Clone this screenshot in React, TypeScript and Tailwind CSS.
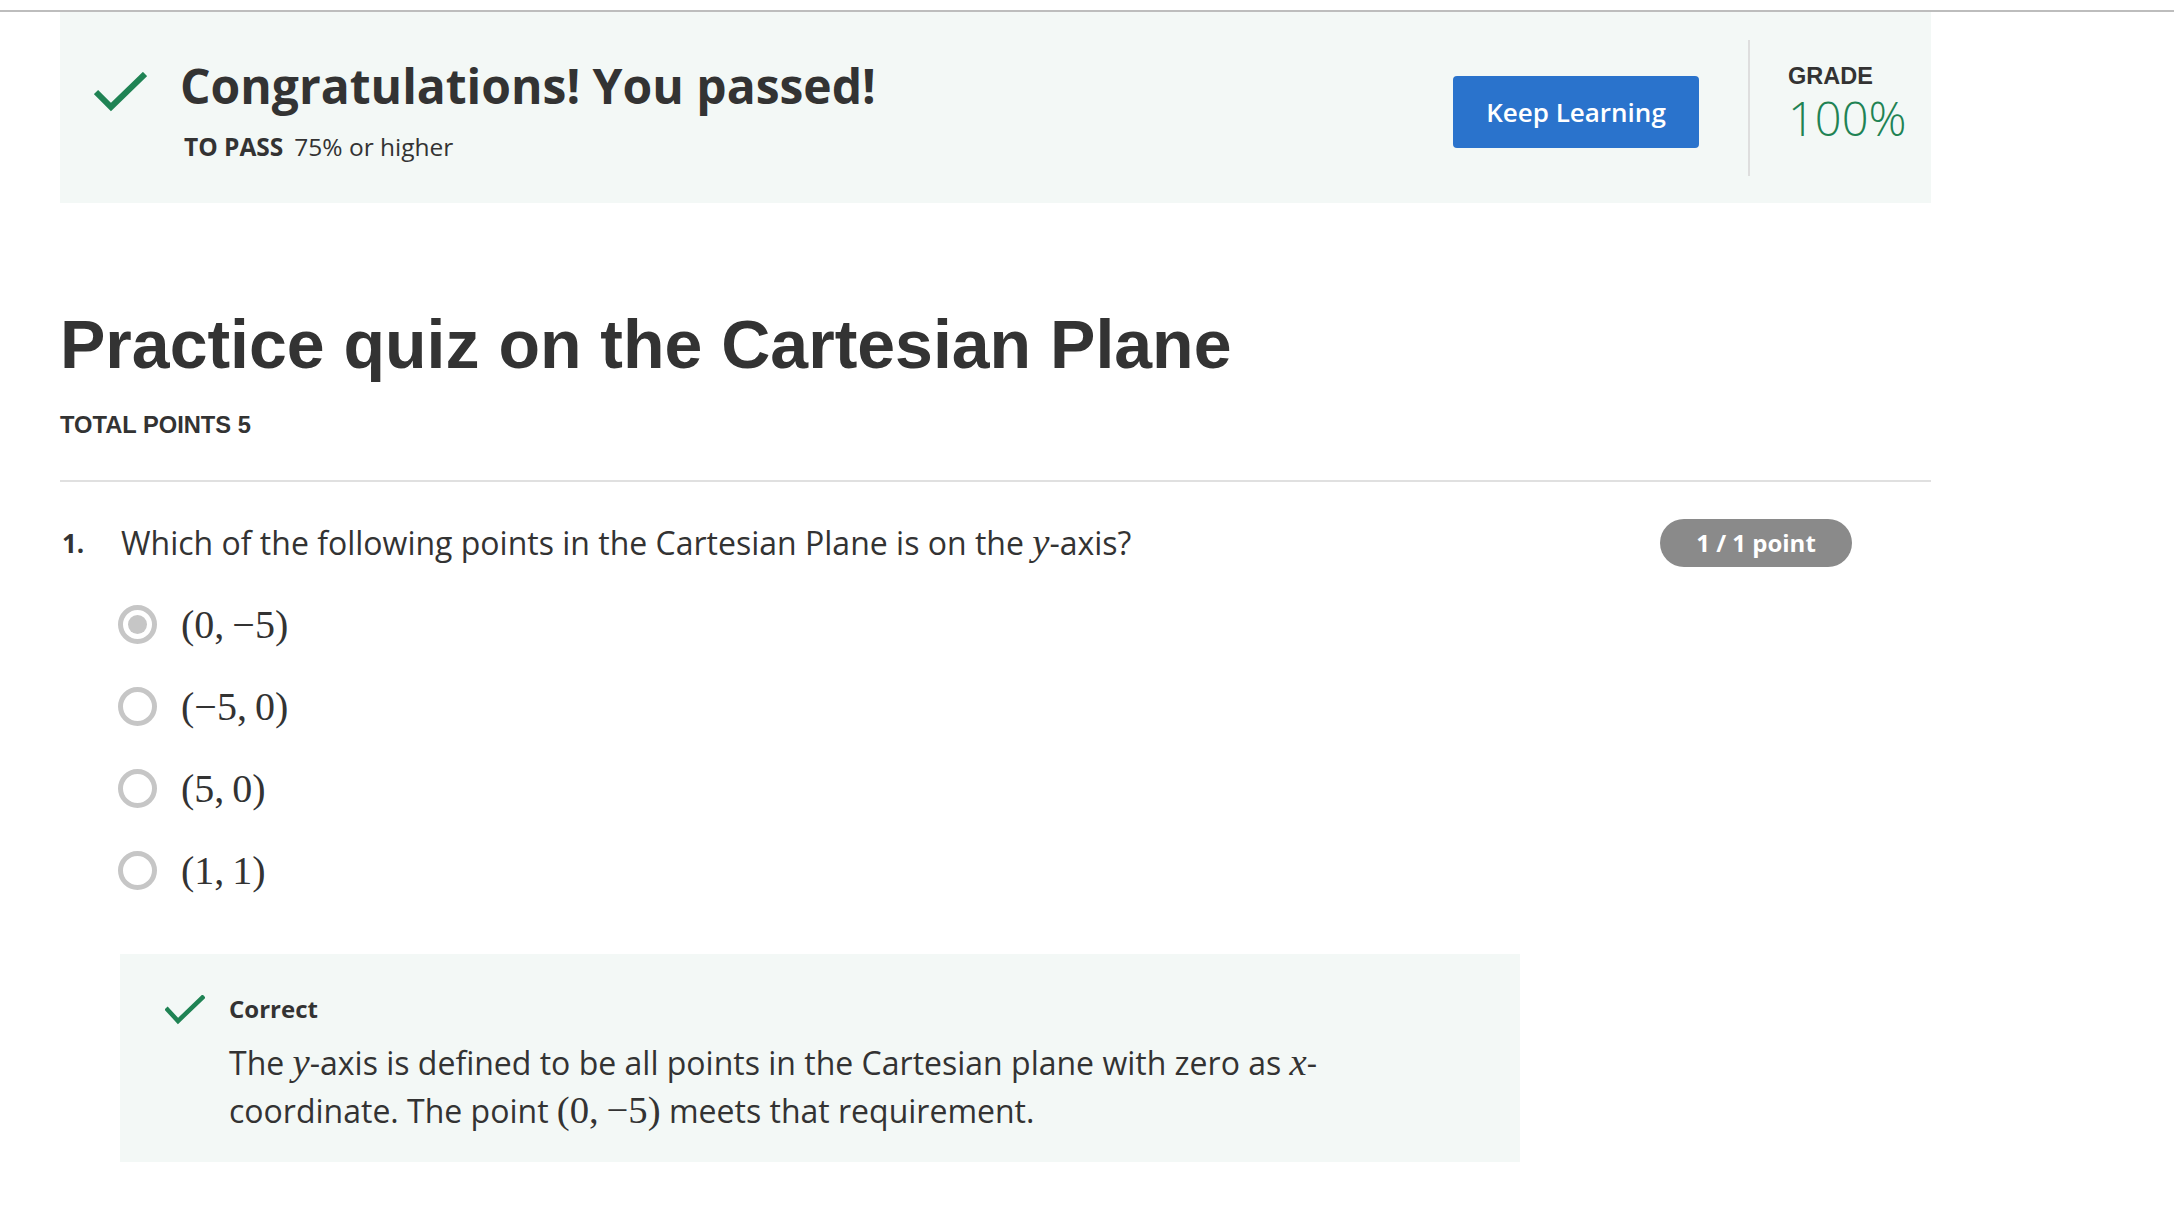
import React from 'react';

const sans = { fontFamily: '"Open Sans", "Liberation Sans", sans-serif' };

const CheckMark: React.FC<{ big?: boolean }> = ({ big }) =>
  big ? (
    <svg width="53" height="40" viewBox="0 0 53 40" className="shrink-0">
      <polyline points="2,20 17,35 51,2" fill="none" stroke="#1f8354" strokeWidth="6" />
    </svg>
  ) : (
    <svg width="40" height="30" viewBox="0 0 40 30" className="shrink-0">
      <polyline points="1,13 13,26 39,1" fill="none" stroke="#1f8354" strokeWidth="4.5" />
    </svg>
  );

const MathVar: React.FC<{ children: React.ReactNode }> = ({ children }) => (
  <span className="font-['Liberation_Serif',serif] italic text-[1.21em] leading-none">{children}</span>
);

const MathText: React.FC<{ children: React.ReactNode }> = ({ children }) => (
  <span className="font-['Liberation_Serif',serif] text-[1.21em] leading-none">{children}</span>
);

interface Option {
  label: string;
  selected: boolean;
}

const options: Option[] = [
  { label: '(0,\u2009\u22125)', selected: true },
  { label: '(\u22125,\u20090)', selected: false },
  { label: '(5,\u20090)', selected: false },
  { label: '(1,\u20091)', selected: false },
];

export default function App() {
  return (
    <div className="min-h-screen w-full bg-white text-[#333333]" style={sans}>
      <div className="pt-[10px]">
        <div className="h-[2px] w-full bg-[#bdbdbd]" />
      </div>

      <div className="ml-[60px] w-[1871px]">
        {/* Result banner */}
        <div className="flex h-[191px] items-start bg-[#f3f8f6]">
          <div className="mt-[44px] flex flex-1 items-start pl-[34px]">
            <div className="mt-[16px]">
              <CheckMark big />
            </div>
            <div className="ml-[33px]">
              <h1 className="text-[48px] font-bold leading-[60px] text-[#333333]">
                Congratulations! You passed!
              </h1>
              <div className="mt-[15px] flex pl-[4px] text-[24.5px] leading-[32px] text-[#333333]">
                <span className="font-bold">TO PASS</span>
                <span className="ml-[11px]">75% or higher</span>
              </div>
            </div>
          </div>

          <button className="mt-[64px] flex h-[72px] w-[246px] items-center justify-center rounded-[4px] bg-[#2a73cc] text-[26px] font-semibold text-white">
            Keep Learning
          </button>

          <div className="ml-[49px] mt-[28px] h-[136px] w-[2px] bg-[#dedede]" />

          <div className="ml-[38px] mt-[50px] w-[143px]">
            <div className="font-['Liberation_Sans',sans-serif] text-[23.5px] font-bold leading-[28px] text-[#333333]">
              GRADE
            </div>
            <div className="text-[47px] font-light leading-[56px] text-[#1f8354]">100%</div>
          </div>
        </div>

        {/* Title */}
        <h2 className="mt-[101px] font-['Liberation_Sans',sans-serif] text-[68px] font-bold leading-[80px] text-[#333333]">
          Practice quiz on the Cartesian Plane
        </h2>
        <div className="mt-[27px] font-['Liberation_Sans',sans-serif] text-[23.7px] font-bold leading-[28px] text-[#333333]">
          TOTAL POINTS 5
        </div>

        <div className="mt-[41px] h-[2px] w-full bg-[#e0e0e0]" />

        {/* Question */}
        <div className="mt-[37px] flex items-start">
          <div className="w-[61px] pl-[2px] text-[26px] font-bold leading-[48px]">1.</div>
          <div className="flex-1 text-[32px] leading-[48px]">
            Which of the following points in the Cartesian Plane is on the <MathVar>y</MathVar>-axis?
          </div>
          <div className="mr-[79px] flex h-[48px] w-[192px] items-center justify-center rounded-full bg-[#8a8a8a] text-[24px] font-bold text-white">
            1 / 1 point
          </div>
        </div>

        <div className="ml-[58px] mt-[16px] flex flex-col">
          {options.map((opt) => (
            <div key={opt.label} className="flex h-[82px] items-center">
              <div className="flex h-[39px] w-[39px] items-center justify-center rounded-full border-[5px] border-[#c6c6c6]">
                {opt.selected && <div className="h-[19px] w-[19px] rounded-full bg-[#c6c6c6]" />}
              </div>
              <div className="ml-[24px] mt-[2px] font-['Liberation_Serif',serif] text-[40px] leading-[46px] text-[#333333]">
                {opt.label}
              </div>
            </div>
          ))}
        </div>

        {/* Feedback */}
        <div className="ml-[60px] mt-[43px] w-[1400px] bg-[#f3f8f6] pb-[27px] pl-[45px] pt-[39px]">
          <div className="flex items-start">
            <div className="mt-[2px]">
              <CheckMark />
            </div>
            <div className="ml-[24px]">
              <div className="text-[24px] font-bold leading-[32px]">Correct</div>
              <div className="mt-[14px] text-[32px] leading-[48px]">
                The <MathVar>y</MathVar>-axis is defined to be all points in the Cartesian plane with zero as{' '}
                <MathVar>x</MathVar>-
                <br />
                coordinate. The point <MathText>(0,&#8201;&#8722;5)</MathText> meets that requirement.
              </div>
            </div>
          </div>
        </div>
      </div>
    </div>
  );
}
